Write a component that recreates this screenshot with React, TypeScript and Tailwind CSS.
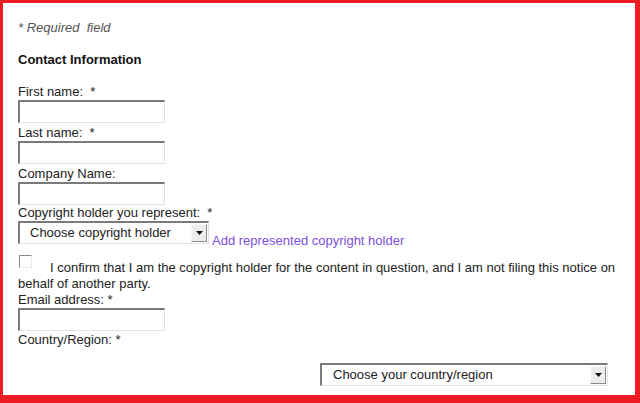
const FONT = { fontFamily: '"Liberation Sans", Arial, sans-serif' };

function TextBox({ className = '' }: { className?: string }) {
  return (
    <div
      className={`h-[23px] w-[147px] bg-white border border-t-2 border-l-2 border-t-[#7a7a7a] border-l-[#7a7a7a] border-b-[#e3e3e3] border-r-[#e3e3e3] ${className}`}
    />
  );
}

function SelectBox({ label, className = '' }: { label: string; className?: string }) {
  return (
    <div
      className={`flex h-[23px] items-stretch bg-white border border-t-2 border-l-2 border-t-[#7a7a7a] border-l-[#7a7a7a] border-b-[#e3e3e3] border-r-[#e3e3e3] ${className}`}
    >
      <span className="flex-1 pl-[10px] text-[13px] leading-[19px] text-[#222]">{label}</span>
      <span className="m-[1px] flex w-[16px] items-center justify-center bg-[#ececec] border border-t-[#f8f8f8] border-l-[#f8f8f8] border-b-[#8a8a8a] border-r-[#8a8a8a]">
        <svg width="7" height="4" viewBox="0 0 7 4">
          <path d="M0 0h7L3.5 4z" fill="#111" />
        </svg>
      </span>
    </div>
  );
}

function Label({ children }: { children: React.ReactNode }) {
  return <div className="h-[16px] text-[13px] leading-[16px] text-[#222]">{children}</div>;
}

export default function App() {
  return (
    <div style={FONT} className="h-[403px] w-[640px] overflow-hidden bg-[#ed1c24] pt-[3px] pl-[3px] pr-[5px] pb-[8px]">
      <div className="h-full bg-white pl-[15px] pr-[4px] pt-[17px]">
        <p className="h-[16px] text-[13px] italic leading-[16px] text-[#555]">* Required&nbsp; field</p>

        <h2 className="mt-[16px] h-[16px] text-[13px] font-bold leading-[16px] text-[#111]">Contact Information</h2>

        <div className="mt-[16px]">
          <Label>First name:&nbsp; *</Label>
          <TextBox />
        </div>
        <div className="mt-[2px]">
          <Label>Last name:&nbsp; *</Label>
          <TextBox />
        </div>
        <div className="mt-[2px]">
          <Label>Company Name:</Label>
          <TextBox />
        </div>
        <div className="mt-[0px]">
          <Label>Copyright holder you represent:&nbsp; *</Label>
          <div className="flex items-end">
            <SelectBox label="Choose copyright holder" className="w-[191px]" />
            <a className="ml-[3px] -mb-[4px] text-[13px] leading-[15px] text-[#7d4fdc]">Add represented copyright holder</a>
          </div>
        </div>

        <p className="mt-[11px] text-[13px] leading-[16px] text-[#222]">
          <span className="mr-[18px] mb-[4px] ml-[1px] inline-block h-[13px] w-[13px] align-baseline bg-white border border-t-[#8a8a8a] border-l-[#8a8a8a] border-b-[#e8e8e8] border-r-[#e8e8e8]" />
          I confirm that I am the copyright holder for the content in question, and I am not filing this notice on behalf of another party.
        </p>

        <div>
          <Label>Email address: *</Label>
          <TextBox />
        </div>
        <div className="mt-[1px]">
          <Label>Country/Region: *</Label>
          <SelectBox label="Choose your country/region" className="ml-[302px] mt-[15px] w-[288px] [&>span:first-child]:pl-[11px]" />
        </div>
      </div>
    </div>
  );
}
